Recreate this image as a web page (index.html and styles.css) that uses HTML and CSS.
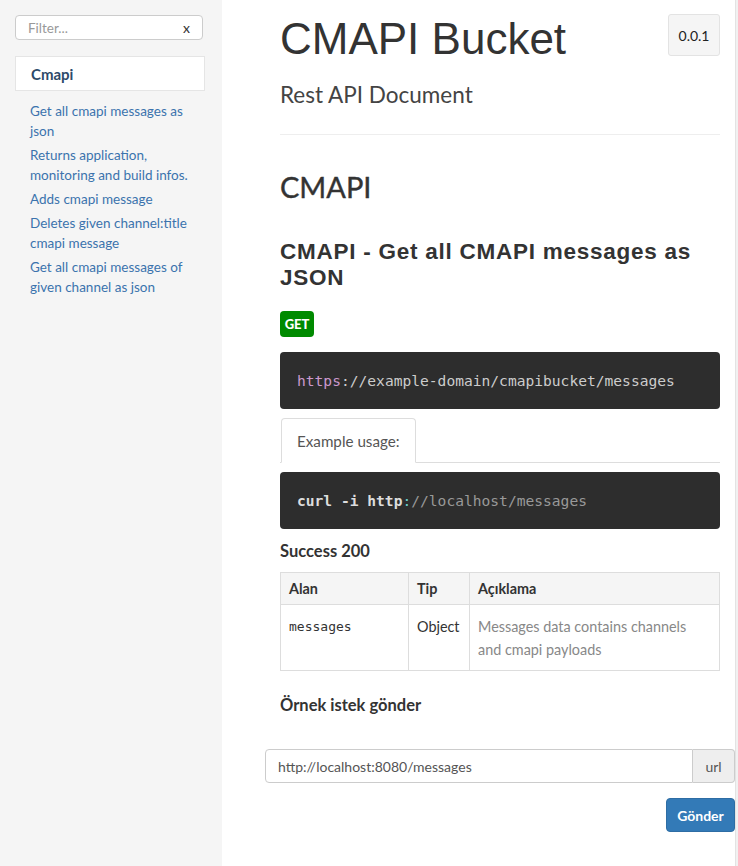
FILE: index.html
```html
<!DOCTYPE html>
<html lang="tr">
<head>
<meta charset="utf-8">
<title>CMAPI Bucket</title>
<link rel="stylesheet" href="styles.css">
</head>
<body>
<div class="page">
  <aside class="sidebar">
    <div class="filter">
      <span class="filter-placeholder">Filter...</span>
      <span class="filter-clear">x</span>
    </div>
    <div class="nav-header">Cmapi</div>
    <ul class="nav-links">
      <li><a>Get all cmapi messages as json</a></li>
      <li><a>Returns application, monitoring and build infos.</a></li>
      <li><a>Adds cmapi message</a></li>
      <li><a>Deletes given channel:title cmapi message</a></li>
      <li><a>Get all cmapi messages of given channel as json</a></li>
    </ul>
  </aside>
  <main class="content">
    <header class="project">
      <h1 class="project-title">CMAPI Bucket</h1>
      <span class="version">0.0.1</span>
    </header>
    <p class="project-sub">Rest API Document</p>
    <hr class="rule">
    <h1 class="group-title">CMAPI</h1>
    <h2 class="api-title">CMAPI - Get all CMAPI messages as JSON</h2>
    <span class="badge-get">GET</span>
    <pre class="code"><span class="tk-kw">https</span><span class="tk-op">:</span>//example-domain/cmapibucket/messages</pre>
    <div class="tabs"><span class="tab">Example usage:</span></div>
    <pre class="code"><span class="tk-b">curl -i http</span><span class="tk-colon">:</span><span class="tk-comment">//localhost/messages</span></pre>
    <h3 class="sub-title">Success 200</h3>
    <table class="fields">
      <thead>
        <tr><th class="c1">Alan</th><th class="c2">Tip</th><th>Açıklama</th></tr>
      </thead>
      <tbody>
        <tr>
          <td class="mono">messages</td>
          <td>Object</td>
          <td class="desc">Messages data contains channels and cmapi payloads</td>
        </tr>
      </tbody>
    </table>
    <h3 class="sub-title sample">Örnek istek gönder</h3>
    <div class="input-group">
      <div class="url-input">http://localhost:8080/messages</div>
      <div class="addon">url</div>
    </div>
    <div class="actions"><button class="btn-send">Gönder</button></div>
  </main>
  <div class="track"></div>
</div>
</body>
</html>
```
FILE: styles.css
```css
* { box-sizing: border-box; }
html, body { margin: 0; padding: 0; }
body {
  font-family: Lato, "Noto Sans", sans-serif;
  font-size: 14px;
  color: #333;
  background: #fff;
}
.page {
  display: flex;
  min-height: 866px;
}
.sidebar {
  width: 222px;
  flex: none;
  background: #f5f5f5;
  padding: 15px 17px 0 15px;
}
.filter {
  height: 25px;
  width: 188px;
  border: 1px solid #ccc;
  border-radius: 4px;
  background: #fff;
  display: flex;
  align-items: center;
  justify-content: space-between;
  padding: 0 12px 0 12px;
  font-size: 13.5px;
}
.filter-placeholder { color: #999; }
.filter-clear { color: #333; font-size: 14px; }
.nav-header {
  margin-top: 16px;
  height: 35px;
  width: 190px;
  background: #fff;
  border: 1px solid #e5e5e5;
  display: flex;
  align-items: center;
  padding-left: 15px;
  font-weight: 700;
  font-size: 15px;
  color: #2d4a6a;
}
.nav-links {
  list-style: none;
  margin: 8px 0 0 0;
  padding: 0 0 0 15px;
}
.nav-links li {
  padding: 2px 0;
  line-height: 20px;
  font-size: 13.5px;
}
.nav-links a { color: #3b73ad; }
.content {
  flex: 1;
  padding: 0 15px 0 58px;
  min-width: 0;
}
.project {
  display: flex;
  justify-content: space-between;
  align-items: flex-start;
}
.project-title {
  margin: 15px 0 0 0;
  font-family: "Liberation Sans", Arial, sans-serif;
  font-weight: 400;
  font-size: 44px;
  line-height: 48px;
  color: #333;
}
.version {
  margin-top: 14px;
  width: 52px;
  height: 42px;
  display: flex;
  align-items: center;
  justify-content: center;
  background: #f5f5f5;
  border: 1px solid #e3e3e3;
  border-radius: 3px;
  font-size: 14px;
  font-weight: 400;
  color: #222;
}
.project-sub {
  margin: 17px 0 0 0;
  font-size: 22.5px;
  line-height: 30px;
  color: #444;
}
.rule {
  margin: 24px 0 0 0;
  border: 0;
  border-top: 1px solid #eee;
}
.group-title {
  margin: 36px 0 0 0;
  font-size: 29px;
  line-height: 32px;
  font-weight: 400;
  color: #333;
  -webkit-text-stroke: 0.4px #333;
}
.api-title {
  margin: 36px 0 0 0;
  font-family: "Liberation Sans", Arial, sans-serif;
  font-weight: 700;
  font-size: 22.5px;
  letter-spacing: 0.75px;
  line-height: 26px;
  color: #333;
}
.badge-get {
  display: flex;
  margin-top: 20px;
  width: 34px;
  height: 26px;
  align-items: center;
  justify-content: center;
  background: #008a00;
  color: #fff;
  font-weight: 900;
  font-size: 13px;
  border-radius: 4px;
}
.code {
  margin: 15px 0 0 0;
  background: #2d2d2d;
  color: #ccc;
  border-radius: 4px;
  height: 57px;
  padding: 0 17px;
  display: flex;
  align-items: center;
  font-family: "DejaVu Sans Mono", "Liberation Mono", monospace;
  font-size: 14.6px;
}
.tk-kw { color: #cc99cd; }
.tk-op { color: #ccc; }
.tk-b { color: #ddd; font-weight: 700; }
.tk-colon { color: #67cdcc; }
.tk-comment { color: #999; }
.tabs {
  margin-top: 9px;
  border-bottom: 1px solid #ddd;
  display: flex;
  padding-left: 1px;
}
.tab {
  height: 45px;
  margin-bottom: -1px;
  padding: 0 15px;
  display: flex;
  align-items: center;
  background: #fff;
  border: 1px solid #ddd;
  border-bottom-color: #fff;
  border-radius: 4px 4px 0 0;
  color: #555;
  font-size: 15.2px;
}
.tabs + .code { margin-top: 9px; }
.sub-title {
  margin: 10px 0 0 0;
  font-size: 16.5px;
  line-height: 24px;
  font-weight: 700;
  color: #333;
}
.fields {
  margin-top: 9px;
  width: 100%;
  border-collapse: collapse;
  font-size: 14.4px;
}
.fields th, .fields td {
  border: 1px solid #ddd;
  padding: 0 8px;
  text-align: left;
  vertical-align: top;
}
.fields th {
  background: #f5f5f5;
  font-weight: 700;
  height: 32px;
  vertical-align: middle;
}
.fields td {
  padding-top: 10px;
  padding-bottom: 9px;
  line-height: 23px;
}
.fields .c1 { width: 128px; }
.fields .c2 { width: 61px; }
.mono {
  font-family: "DejaVu Sans Mono", "Liberation Mono", monospace;
  font-size: 13px;
  color: #333;
}
.desc { color: #888; }
.sample { margin-top: 22px; }
.input-group {
  margin: 32px -15px 0 -15px;
  display: flex;
  height: 34px;
}
.url-input {
  flex: 1;
  border: 1px solid #ccc;
  border-radius: 4px 0 0 4px;
  display: flex;
  align-items: center;
  padding-left: 12px;
  color: #555;
  font-size: 14px;
}
.addon {
  width: 42px;
  background: #eee;
  border: 1px solid #ccc;
  border-left: 0;
  border-radius: 0 4px 4px 0;
  display: flex;
  align-items: center;
  justify-content: center;
  color: #555;
  font-size: 14px;
}
.actions {
  display: flex;
  justify-content: flex-end;
  margin: 15px -15px 0 0;
}
.btn-send {
  width: 69px;
  height: 34px;
  background: #337ab7;
  border: 1px solid #2e6da4;
  border-radius: 4px;
  color: #fff;
  font-family: Lato, "Noto Sans", sans-serif;
  font-weight: 700;
  font-size: 14px;
}
.track {
  width: 3px;
  flex: none;
  background: #f1f1f1;
  border-left: 1px solid #e3e3e3;
}
```
